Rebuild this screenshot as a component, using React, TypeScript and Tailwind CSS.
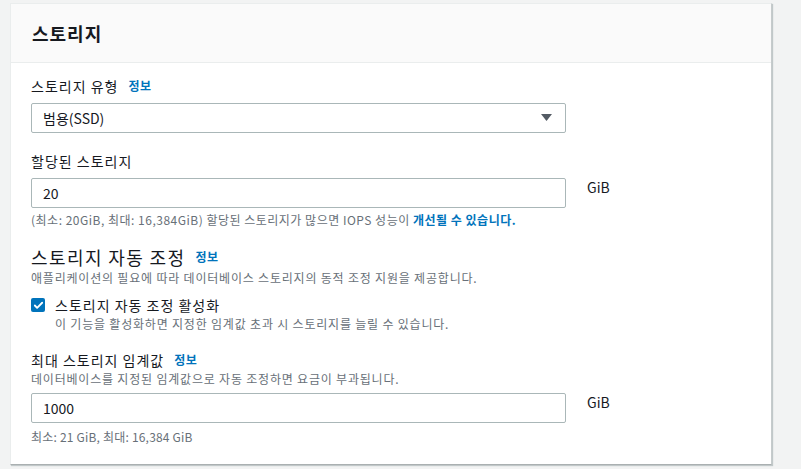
import { Check } from "lucide-react";

const font = { fontFamily: '"Noto Sans CJK KR", "Noto Sans", sans-serif' };

function Info() {
  return <span className="ml-[10px] text-[12px] font-bold tracking-[0.5px] text-[#0073bb]">정보</span>;
}

function TextInput({ value }: { value: string }) {
  return (
    <div className="flex items-center gap-[21px]">
      <div className="flex h-[30px] w-[535px] items-center rounded-[2px] border border-[#aab7b8] bg-white px-[11px] text-[14px] text-[#16191f]">
        {value}
      </div>
      <span className="-mt-[12px] text-[14px] text-[#16191f]">GiB</span>
    </div>
  );
}

export default function App() {
  return (
    <div className="min-h-[469px] w-[801px] bg-[#f2f3f3] pt-[3px] pl-[10px]" style={font}>
      <div className="w-[762px] border border-[#eaeded] border-r-[#c6cbcc] border-b-[#aab0b1] bg-white shadow-[1px_1px_1px_rgba(0,28,36,0.2)]">
        <div className="flex h-[59px] items-center border-b border-[#eaeded] bg-[#fafafa] px-[21px]">
          <h2 className="text-[18px] leading-[24px] font-bold tracking-[1px] text-[#16191f]">스토리지</h2>
        </div>

        <div className="px-[20px] pt-[13px] pb-[18px] text-[#16191f]">
          <div className="flex items-center text-[14px] leading-[20px] tracking-[1px]">
            스토리지 유형
            <Info />
          </div>
          <div className="mt-[7px] flex h-[30px] w-[535px] items-center justify-between rounded-[2px] border border-[#aab7b8] bg-white pr-[13px] pl-[11px] text-[14px]">
            범용(SSD)
            <svg width="11" height="8" viewBox="0 0 11 8">
              <polygon points="0,0 11,0 5.5,7" fill="#545b64" />
            </svg>
          </div>

          <div className="mt-[18px] text-[14px] leading-[20px] tracking-[1px]">할당된 스토리지</div>
          <div className="mt-[7px]">
            <TextInput value="20" />
          </div>
          <p className="mt-[3px] text-[12px] leading-[18px] tracking-[0.5px] text-[#687078]">
            (최소: 20GiB, 최대: 16,384GiB) 할당된 스토리지가 많으면 IOPS 성능이{" "}
            <span className="font-bold text-[#0073bb]">개선될 수 있습니다.</span>
          </p>

          <div className="mt-[17px] flex items-center text-[18px] leading-[22px] tracking-[1.4px]">
            스토리지 자동 조정
            <Info />
          </div>
          <p className="mt-[1px] text-[12px] leading-[18px] tracking-[0.8px] text-[#687078]">
            애플리케이션의 필요에 따라 데이터베이스 스토리지의 동적 조정 지원을 제공합니다.
          </p>

          <div className="mt-[8px] flex items-start gap-[10px]">
            <div className="mt-[3px] flex h-[14px] w-[14px] items-center justify-center rounded-[2px] bg-[#0073bb]">
              <Check className="h-[11px] w-[11px] text-white" strokeWidth={4} />
            </div>
            <div>
              <div className="text-[14px] leading-[20px] tracking-[1px]">스토리지 자동 조정 활성화</div>
              <div className="text-[12px] leading-[17px] tracking-[0.8px] text-[#687078]">
                이 기능을 활성화하면 지정한 임계값 초과 시 스토리지를 늘릴 수 있습니다.
              </div>
            </div>
          </div>

          <div className="mt-[18px] flex items-center text-[14px] leading-[20px] tracking-[1px]">
            최대 스토리지 임계값
            <Info />
          </div>
          <p className="text-[12px] leading-[18px] tracking-[0.8px] text-[#687078]">
            데이터베이스를 지정된 임계값으로 자동 조정하면 요금이 부과됩니다.
          </p>
          <div className="mt-[5px]">
            <TextInput value="1000" />
          </div>
          <p className="mt-[5px] text-[12px] leading-[18px] tracking-[0.2px] text-[#687078]">최소: 21 GiB, 최대: 16,384 GiB</p>
        </div>
      </div>
    </div>
  );
}
